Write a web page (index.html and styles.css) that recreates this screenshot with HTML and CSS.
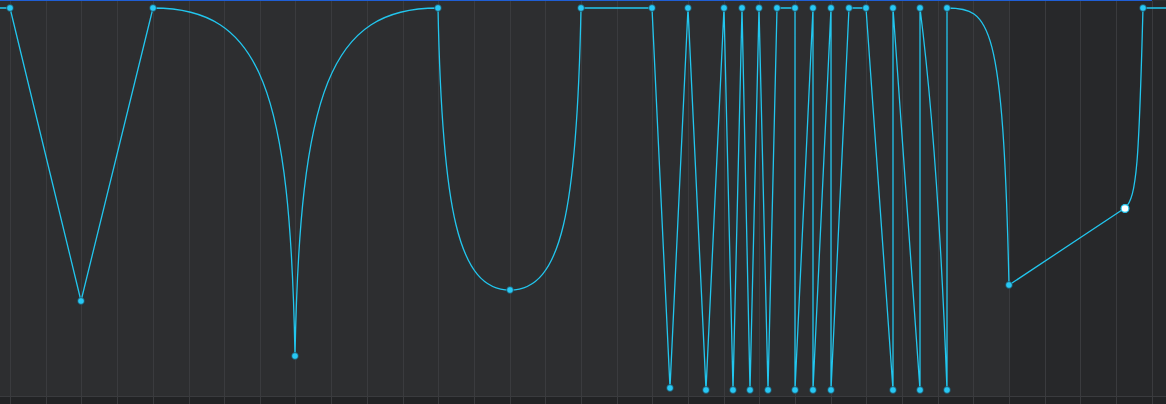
FILE: index.html
```html
<!DOCTYPE html>
<html>
<head>
<meta charset="utf-8">
<link rel="stylesheet" href="styles.css">
</head>
<body>
<div class="editor">
  <div class="topbar"></div>
  <svg class="canvas" width="1166" height="403" viewBox="0 1 1166 403">
    <rect x="0" y="0" width="1009" height="396" fill="#2d2e30"/>
    <rect x="1009" y="0" width="157" height="396" fill="#27282a"/>
    <rect x="0" y="396" width="1166" height="8" fill="#222325"/>
    <g stroke="#3a3b3e" stroke-width="1">
      <line x1="10.5" y1="0" x2="10.5" y2="404"/>
      <line x1="46.5" y1="0" x2="46.5" y2="404"/>
      <line x1="81.5" y1="0" x2="81.5" y2="404"/>
      <line x1="117.5" y1="0" x2="117.5" y2="404"/>
      <line x1="153.5" y1="0" x2="153.5" y2="404"/>
      <line x1="189.5" y1="0" x2="189.5" y2="404"/>
      <line x1="224.5" y1="0" x2="224.5" y2="404"/>
      <line x1="260.5" y1="0" x2="260.5" y2="404"/>
      <line x1="295.5" y1="0" x2="295.5" y2="404"/>
      <line x1="331.5" y1="0" x2="331.5" y2="404"/>
      <line x1="367.5" y1="0" x2="367.5" y2="404"/>
      <line x1="403.5" y1="0" x2="403.5" y2="404"/>
      <line x1="438.5" y1="0" x2="438.5" y2="404"/>
      <line x1="474.5" y1="0" x2="474.5" y2="404"/>
      <line x1="510.5" y1="0" x2="510.5" y2="404"/>
      <line x1="545.5" y1="0" x2="545.5" y2="404"/>
      <line x1="581.5" y1="0" x2="581.5" y2="404"/>
      <line x1="617.5" y1="0" x2="617.5" y2="404"/>
      <line x1="652.5" y1="0" x2="652.5" y2="404"/>
      <line x1="688.5" y1="0" x2="688.5" y2="404"/>
      <line x1="724.5" y1="0" x2="724.5" y2="404"/>
      <line x1="759.5" y1="0" x2="759.5" y2="404"/>
      <line x1="795.5" y1="0" x2="795.5" y2="404"/>
      <line x1="831.5" y1="0" x2="831.5" y2="404"/>
      <line x1="866.5" y1="0" x2="866.5" y2="404"/>
      <line x1="902.5" y1="0" x2="902.5" y2="404"/>
      <line x1="938.5" y1="0" x2="938.5" y2="404"/>
      <line x1="973.5" y1="0" x2="973.5" y2="404"/>
      <line x1="1009.5" y1="0" x2="1009.5" y2="404"/>
      <line x1="1045.5" y1="0" x2="1045.5" y2="404"/>
      <line x1="1080.5" y1="0" x2="1080.5" y2="404"/>
      <line x1="1116.5" y1="0" x2="1116.5" y2="404"/>
      <line x1="1152.5" y1="0" x2="1152.5" y2="404"/>
      <line x1="0" y1="396.5" x2="1166" y2="396.5"/>
    </g>
    <path fill="none" stroke="#22c6ee" stroke-width="1.3" stroke-linejoin="round"
      d="M0,8 L10,8 L81,301 L153,8
         C262,8 290,90 295,356
         C300,90 330,8 438,8
         C442,210 458,290 510,290
         C562,290 577,210 581,8
         L652,8 L670,388 L688,8 L706,390 L724,8 L733,390 L742,8 L750,390 L759,8 L768,390 L777,8
         L795,8 L795,390 L813,8 L813,390 L831,8 L831,390 L849,8 L866,8 L893,390 L893,8 L920,390 L920,8
         Q938,150 947,390 L947,8
         C990,8 1003,20 1009,285
         L1125,208
         C1137,198 1139,160 1143,8 L1166,8"/>
    <g fill="#27c8f4" stroke="#1f3a48" stroke-width="0.7">
      <circle cx="10" cy="8" r="3.4"/>
      <circle cx="81" cy="301" r="3.4"/>
      <circle cx="153" cy="8" r="3.4"/>
      <circle cx="295" cy="356" r="3.4"/>
      <circle cx="438" cy="8" r="3.4"/>
      <circle cx="510" cy="290" r="3.4"/>
      <circle cx="581" cy="8" r="3.4"/>
      <circle cx="652" cy="8" r="3.4"/>
      <circle cx="670" cy="388" r="3.4"/>
      <circle cx="688" cy="8" r="3.4"/>
      <circle cx="706" cy="390" r="3.4"/>
      <circle cx="724" cy="8" r="3.4"/>
      <circle cx="733" cy="390" r="3.4"/>
      <circle cx="742" cy="8" r="3.4"/>
      <circle cx="750" cy="390" r="3.4"/>
      <circle cx="759" cy="8" r="3.4"/>
      <circle cx="768" cy="390" r="3.4"/>
      <circle cx="777" cy="8" r="3.4"/>
      <circle cx="795" cy="8" r="3.4"/>
      <circle cx="795" cy="390" r="3.4"/>
      <circle cx="813" cy="8" r="3.4"/>
      <circle cx="813" cy="390" r="3.4"/>
      <circle cx="831" cy="8" r="3.4"/>
      <circle cx="831" cy="390" r="3.4"/>
      <circle cx="849" cy="8" r="3.4"/>
      <circle cx="866" cy="8" r="3.4"/>
      <circle cx="893" cy="390" r="3.4"/>
      <circle cx="893" cy="8" r="3.4"/>
      <circle cx="920" cy="390" r="3.4"/>
      <circle cx="920" cy="8" r="3.4"/>
      <circle cx="947" cy="390" r="3.4"/>
      <circle cx="947" cy="8" r="3.4"/>
      <circle cx="1009" cy="285" r="3.4"/>
      <circle cx="1143" cy="8" r="3.4"/>
    </g>
    <circle cx="1125" cy="208.5" r="3.9" fill="#ffffff" stroke="#22c6ee" stroke-width="1.2"/>
  </svg>
</div>
</body>
</html>
```

FILE: styles.css
```css
html, body {
  margin: 0;
  padding: 0;
  background: #2d2e30;
  overflow: hidden;
}
.editor {
  width: 1166px;
  height: 404px;
  display: flex;
  flex-direction: column;
  background: #2d2e30;
}
.topbar {
  width: 1152px;
  height: 1px;
  background: #1f5fd6;
  flex: none;
}
.canvas {
  display: block;
  flex: none;
}
```
